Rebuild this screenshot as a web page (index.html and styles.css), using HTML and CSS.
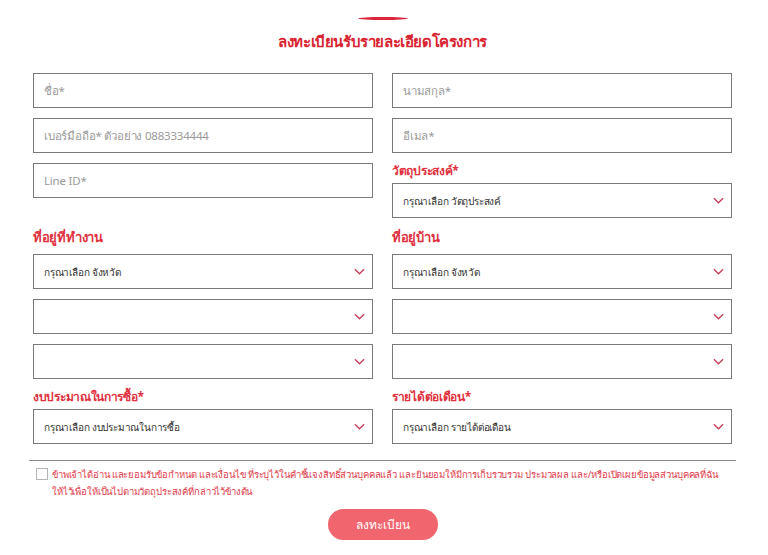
FILE: index.html
```html
<!DOCTYPE html>
<html lang="th">
<head>
  <meta charset="UTF-8" />
  <meta name="viewport" content="width=device-width, initial-scale=1.0" />
  <title>ลงทะเบียนรับรายละเอียดโครงการ</title>
  <link rel="stylesheet" href="styles.css">
</head>
<body>
  <div class="container">
    <div class="accent"></div>
    <h2 class="title">ลงทะเบียนรับรายละเอียดโครงการ</h2>

    <form class="reg-form">
      <div class="grid">
        <input class="field" type="text" placeholder="ชื่อ*" />
        <input class="field" type="text" placeholder="นามสกุล*" />
        <input class="field" type="tel" placeholder="เบอร์มือถือ* ตัวอย่าง 0883334444" />
        <input class="field" type="email" placeholder="อีเมล*" />
        <input class="field top" type="text" placeholder="Line ID*" />

        <div class="group">
          <label class="label">วัตถุประสงค์*</label>
          <div class="select-wrap">
            <select class="select"><option>กรุณาเลือก วัตถุประสงค์</option></select>
            <svg class="chevron" viewBox="0 0 12 7"><path d="M1 1l5 5 5-5" /></svg>
          </div>
        </div>

        <div class="group">
          <div class="section-label">ที่อยู่ที่ทำงาน</div>
          <div class="stack">
            <div class="select-wrap">
              <select class="select"><option>กรุณาเลือก จังหวัด</option></select>
              <svg class="chevron" viewBox="0 0 12 7"><path d="M1 1l5 5 5-5" /></svg>
            </div>
            <div class="select-wrap">
              <select class="select"><option></option></select>
              <svg class="chevron" viewBox="0 0 12 7"><path d="M1 1l5 5 5-5" /></svg>
            </div>
            <div class="select-wrap">
              <select class="select"><option></option></select>
              <svg class="chevron" viewBox="0 0 12 7"><path d="M1 1l5 5 5-5" /></svg>
            </div>
          </div>
        </div>

        <div class="group">
          <div class="section-label">ที่อยู่บ้าน</div>
          <div class="stack">
            <div class="select-wrap">
              <select class="select"><option>กรุณาเลือก จังหวัด</option></select>
              <svg class="chevron" viewBox="0 0 12 7"><path d="M1 1l5 5 5-5" /></svg>
            </div>
            <div class="select-wrap">
              <select class="select"><option></option></select>
              <svg class="chevron" viewBox="0 0 12 7"><path d="M1 1l5 5 5-5" /></svg>
            </div>
            <div class="select-wrap">
              <select class="select"><option></option></select>
              <svg class="chevron" viewBox="0 0 12 7"><path d="M1 1l5 5 5-5" /></svg>
            </div>
          </div>
        </div>

        <div class="group">
          <label class="label">งบประมาณในการซื้อ*</label>
          <div class="select-wrap">
            <select class="select"><option>กรุณาเลือก งบประมาณในการซื้อ</option></select>
            <svg class="chevron" viewBox="0 0 12 7"><path d="M1 1l5 5 5-5" /></svg>
          </div>
        </div>

        <div class="group">
          <label class="label">รายได้ต่อเดือน*</label>
          <div class="select-wrap">
            <select class="select"><option>กรุณาเลือก รายได้ต่อเดือน</option></select>
            <svg class="chevron" viewBox="0 0 12 7"><path d="M1 1l5 5 5-5" /></svg>
          </div>
        </div>
      </div>

      <div class="divider"></div>

      <label class="consent">
        <input type="checkbox" class="check" />
        <span>ข้าพเจ้าได้อ่าน และยอมรับข้อกำหนด และเงื่อนไข ที่ระบุไว้ในคำชี้แจงสิทธิ์ส่วนบุคคลแล้ว และยินยอมให้มีการเก็บรวบรวม ประมวลผล และ/หรือเปิดเผยข้อมูลส่วนบุคคลที่ฉัน<br />ให้ไว้เพื่อให้เป็นไปตามวัตถุประสงค์ที่กล่าวไว้ข้างต้น</span>
      </label>

      <button type="submit" class="submit">ลงทะเบียน</button>
    </form>
  </div>
</body>
</html>
```

FILE: styles.css
```css
* {
  box-sizing: border-box;
  margin: 0;
  padding: 0;
}

body {
  background: #fff;
  font-family: 'Noto Sans', sans-serif;
  color: #333;
}

.container {
  width: 707px;
  margin-left: 29px;
  padding-top: 17px;
}

.accent {
  width: 50px;
  height: 3px;
  margin: 0 auto;
  background: #d9263a;
  border-radius: 50%;
}

.title {
  margin-top: 11px;
  margin-bottom: 22px;
  text-align: center;
  font-size: 15px;
  line-height: 20px;
  letter-spacing: -0.4px;
  font-weight: 700;
  color: #d9232f;
}

.grid {
  display: grid;
  grid-template-columns: 340px 340px;
  column-gap: 19px;
  row-gap: 10px;
  padding: 0 4px;
}

.field,
.select {
  width: 100%;
  height: 35px;
  padding: 0 10px;
  border: 1px solid #7a7a7a;
  background: #fff;
  outline: none;
  font-family: inherit;
}

.field {
  font-size: 11.5px;
  letter-spacing: -0.2px;
}

.field::placeholder {
  color: #9a9a9a;
}

.field.top {
  align-self: start;
}

.select {
  appearance: none;
  -webkit-appearance: none;
  font-size: 10px;
  letter-spacing: -0.2px;
  color: #333;
  padding-right: 30px;
}

.select-wrap {
  position: relative;
}

.chevron {
  position: absolute;
  right: 8px;
  top: 14px;
  width: 11px;
  height: 7px;
  fill: none;
  stroke: #c7415c;
  stroke-width: 1.5;
  pointer-events: none;
}

.label {
  display: block;
  font-size: 12px;
  line-height: 16px;
  letter-spacing: -0.3px;
  margin-bottom: 4px;
  font-weight: 700;
  color: #e0303e;
}

.section-label {
  font-size: 13px;
  line-height: 18px;
  letter-spacing: -0.3px;
  margin-bottom: 8px;
  font-weight: 700;
  color: #e0303e;
}

.stack {
  display: flex;
  flex-direction: column;
  gap: 10px;
}

.divider {
  height: 1px;
  margin-top: 16px;
  background: #8a8a8a;
}

.consent {
  display: flex;
  align-items: flex-start;
  gap: 2px;
  margin-top: 5px;
  padding-left: 7px;
  font-size: 9.5px;
  line-height: 17px;
  letter-spacing: -0.15px;
  color: #e03a4a;
  white-space: nowrap;
}

.check {
  appearance: none;
  -webkit-appearance: none;
  flex: 0 0 12px;
  width: 12px;
  height: 12px;
  margin-top: 2px;
  margin-right: 2px;
  border: 1px solid #b5b5b5;
  background: #fff;
}

.submit {
  display: block;
  width: 110px;
  height: 31px;
  margin: 9px auto 0;
  border: none;
  border-radius: 16px;
  background: #f0656e;
  color: #fff;
  font-family: inherit;
  font-size: 12px;
  cursor: pointer;
}
```
